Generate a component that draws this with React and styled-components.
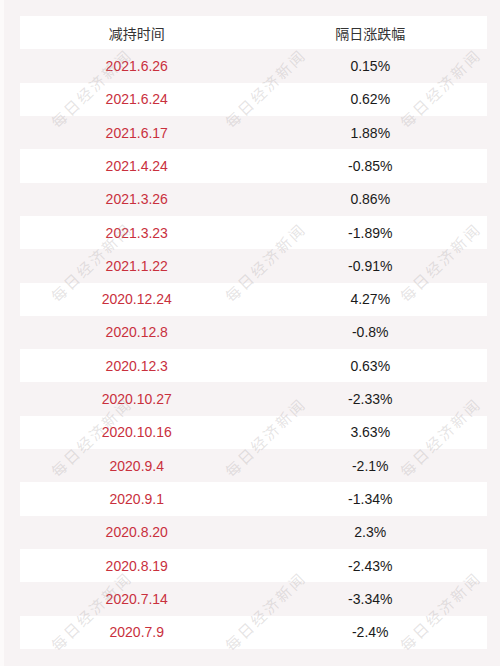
import React from "react";
import styled, { createGlobalStyle } from "styled-components";

const Global = createGlobalStyle`
  html, body { margin: 0; padding: 0; background: #f7f3f4; }
  #root { width: 500px; height: 666px; }
`;

const Page = styled.div`
  position: relative;
  width: 500px;
  height: 666px;
  box-sizing: border-box;
  background: #f7f3f4;
  border-left: 4px solid #fcfafa;
  padding: 16px 12px 17px 17px;
  overflow: hidden;
`;

const Table = styled.div`
  display: grid;
  grid-template-columns: 1fr 1fr;
  grid-template-rows: repeat(19, 1fr);
  height: 633px;
`;

const Cell = styled.div`
  display: flex;
  align-items: center;
  justify-content: center;
  background: ${(p) => (p.$striped ? "#ffffff" : "transparent")};
  font-family: "Liberation Sans", "Noto Sans CJK SC", Arial, sans-serif;
  font-size: 14px;
  color: ${(p) => (p.$tone === "date" ? "#c9303d" : p.$tone === "head" ? "#333333" : "#1a1a1a")};
  transform: translateX(-1px);
`;

const WatermarkLayer = styled.div`
  position: absolute;
  inset: 0;
  pointer-events: none;
`;

const Watermark = styled.div`
  position: absolute;
  left: ${(p) => p.$x}px;
  top: ${(p) => p.$y}px;
  transform: translate(-50%, -50%) rotate(-44deg);
  font-family: "Noto Sans CJK SC", sans-serif;
  font-size: 15px;
  letter-spacing: 2.5px;
  white-space: nowrap;
  color: rgba(170, 165, 166, 0.3);
`;

const rows = [
  ["2021.6.26", "0.15%"],
  ["2021.6.24", "0.62%"],
  ["2021.6.17", "1.88%"],
  ["2021.4.24", "-0.85%"],
  ["2021.3.26", "0.86%"],
  ["2021.3.23", "-1.89%"],
  ["2021.1.22", "-0.91%"],
  ["2020.12.24", "4.27%"],
  ["2020.12.8", "-0.8%"],
  ["2020.12.3", "0.63%"],
  ["2020.10.27", "-2.33%"],
  ["2020.10.16", "3.63%"],
  ["2020.9.4", "-2.1%"],
  ["2020.9.1", "-1.34%"],
  ["2020.8.20", "2.3%"],
  ["2020.8.19", "-2.43%"],
  ["2020.7.14", "-3.34%"],
  ["2020.7.9", "-2.4%"],
];

const marksX = [91, 265, 440];
const marksY = [88, 262, 437, 611];

export default function App() {
  return (
    <>
      <Global />
      <Page>
        <Table>
          <Cell $striped $tone="head">减持时间</Cell>
          <Cell $striped $tone="head">隔日涨跌幅</Cell>
          {rows.map(([d, v], i) => (
            <React.Fragment key={d}>
              <Cell $striped={i % 2 === 1} $tone="date">{d}</Cell>
              <Cell $striped={i % 2 === 1} $tone="num">{v}</Cell>
            </React.Fragment>
          ))}
        </Table>
        <WatermarkLayer>
          {marksY.map((y) =>
            marksX.map((x) => (
              <Watermark key={`${x}-${y}`} $x={x - 4} $y={y}>
                每日经济新闻
              </Watermark>
            ))
          )}
        </WatermarkLayer>
      </Page>
    </>
  );
}
